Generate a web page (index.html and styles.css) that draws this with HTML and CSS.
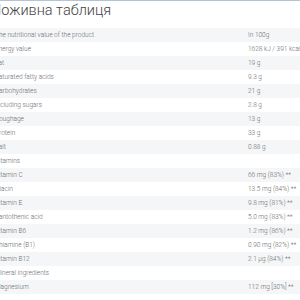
FILE: index.html
```html
<!DOCTYPE html>
<html>
<head>
<meta charset="utf-8">
<link rel="stylesheet" href="styles.css">
</head>
<body>
<div class="panel">
  <h2 class="title">Поживна таблиця</h2>
  <table class="nutri">
    <tbody>
      <tr><td>The nutritional value of the product</td><td>In 100g</td></tr>
      <tr><td>Energy value</td><td>1628 kJ / 391 kcal</td></tr>
      <tr><td>Fat</td><td>19 g</td></tr>
      <tr><td>Saturated fatty acids</td><td>9.3 g</td></tr>
      <tr><td>Carbohydrates</td><td>21 g</td></tr>
      <tr><td>Including sugars</td><td>2.8 g</td></tr>
      <tr><td>Roughage</td><td>13 g</td></tr>
      <tr><td>Protein</td><td>33 g</td></tr>
      <tr><td>Salt</td><td>0.88 g</td></tr>
      <tr><td>Vitamins</td><td></td></tr>
      <tr><td>Vitamin C</td><td>66 mg (83%) **</td></tr>
      <tr><td>Niacin</td><td>13.5 mg (84%) **</td></tr>
      <tr><td>Vitamin E</td><td>9.8 mg (81%) **</td></tr>
      <tr><td>Pantothenic acid</td><td>5.0 mg (83%) **</td></tr>
      <tr><td>Vitamin B6</td><td>1.2 mg (86%) **</td></tr>
      <tr><td>Thiamine (B1)</td><td>0.90 mg (82%) **</td></tr>
      <tr><td>Vitamin B12</td><td>2.1 µg (84%) **</td></tr>
      <tr><td>Mineral ingredients</td><td></td></tr>
      <tr><td>Magnesium</td><td>112 mg [30%] **</td></tr>
      <tr><td></td><td></td></tr>
    </tbody>
  </table>
</div>
</body>
</html>
```
FILE: styles.css
```css
html, body {
  margin: 0;
  padding: 0;
  background: #ffffff;
  overflow: hidden;
}
body {
  font-family: Roboto, "Noto Sans", sans-serif;
  color: #666;
}
.panel {
  border-top: 1px solid #b5c4d3;
  margin-left: -7px;
  width: 400px;
}
.title {
  margin: 0 0 0 -2px;
  height: 26px;
  font-size: 14.5px;
  font-weight: 300;
  color: #444;
  line-height: 18px;
  padding-top: 1px;
  white-space: nowrap;
}
.nutri {
  border-collapse: collapse;
  width: 400px;
  font-size: 6.5px;
  font-weight: 300;
  color: #6a6a6a;
}
.nutri td {
  height: 14px;
  padding: 0 0 0 2px;
  white-space: nowrap;
  vertical-align: middle;
}
.nutri td:first-child {
  width: 251px;
}
.nutri tr:nth-child(odd) {
  background: #f5f6f8;
}
```
